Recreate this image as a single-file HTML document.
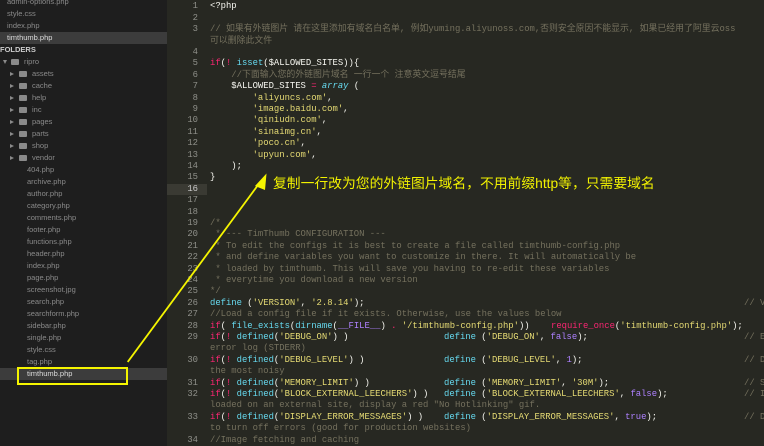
<!DOCTYPE html>
<html><head><meta charset="utf-8"><style>
*{margin:0;padding:0;box-sizing:border-box}
body{width:764px;height:446px;overflow:hidden;background:#272822;position:relative;font-family:"Liberation Sans","Noto Sans CJK SC",sans-serif}
#side{position:absolute;left:0;top:0;width:167px;height:446px;background:#1e1e1e;color:#8a8a8a;font-size:7.5px}
.r{position:absolute;height:12px;line-height:12px;white-space:nowrap;left:0;width:167px}
.sel{background:#3c3c3c;color:#ddd}
.fo{display:inline-block;width:8px;height:6px;background:#8a8a8a;vertical-align:middle;margin-right:5px;border-radius:1px}
.ar{display:inline-block;width:0;height:0;border-left:4px solid #8a8a8a;border-top:2.5px solid transparent;border-bottom:2.5px solid transparent;margin-right:5px;vertical-align:middle}
.ad{display:inline-block;width:0;height:0;border-top:4px solid #8a8a8a;border-left:2.5px solid transparent;border-right:2.5px solid transparent;margin-right:4px;vertical-align:middle}
#ed{position:absolute;left:167px;top:0;width:597px;height:446px;overflow:hidden;font-family:"Liberation Mono","Noto Sans CJK SC",monospace;font-size:8.9px;color:#f8f8f2}
.l{position:absolute;left:0;width:597px;height:11.4px;line-height:11.4px;white-space:pre}
.n{position:absolute;left:0;width:31px;text-align:right;color:#8f908a}
.c{position:absolute;left:43px}
.c2{position:absolute;left:277px}
.c3{position:absolute;left:384px}
.c4{position:absolute;left:577px}
.cur{background:#3a3a33}
.k{color:#f92672}.f{color:#66d9ef}.s{color:#e6db74}.p{color:#ae81ff}.m{color:#75715e}.i{color:#66d9ef;font-style:italic}
</style></head><body>
<div id="side">
<div class="r" style="top:-4px;padding-left:7px">admin-options.php</div>
<div class="r" style="top:8px;padding-left:7px">style.css</div>
<div class="r" style="top:20px;padding-left:7px">index.php</div>
<div class="r sel" style="top:32px;padding-left:7px">timthumb.php</div>
<div class="r" style="top:44px;padding-left:0;color:#ccc;font-weight:bold">FOLDERS</div>
<div class="r" style="top:56px;padding-left:3px"><span class="ad"></span><span class="fo"></span>ripro</div>
<div class="r" style="top:68px;padding-left:10px"><span class="ar"></span><span class="fo"></span>assets</div>
<div class="r" style="top:80px;padding-left:10px"><span class="ar"></span><span class="fo"></span>cache</div>
<div class="r" style="top:92px;padding-left:10px"><span class="ar"></span><span class="fo"></span>help</div>
<div class="r" style="top:104px;padding-left:10px"><span class="ar"></span><span class="fo"></span>inc</div>
<div class="r" style="top:116px;padding-left:10px"><span class="ar"></span><span class="fo"></span>pages</div>
<div class="r" style="top:128px;padding-left:10px"><span class="ar"></span><span class="fo"></span>parts</div>
<div class="r" style="top:140px;padding-left:10px"><span class="ar"></span><span class="fo"></span>shop</div>
<div class="r" style="top:152px;padding-left:10px"><span class="ar"></span><span class="fo"></span>vendor</div>
<div class="r" style="top:164px;padding-left:27px">404.php</div>
<div class="r" style="top:176px;padding-left:27px">archive.php</div>
<div class="r" style="top:188px;padding-left:27px">author.php</div>
<div class="r" style="top:200px;padding-left:27px">category.php</div>
<div class="r" style="top:212px;padding-left:27px">comments.php</div>
<div class="r" style="top:224px;padding-left:27px">footer.php</div>
<div class="r" style="top:236px;padding-left:27px">functions.php</div>
<div class="r" style="top:248px;padding-left:27px">header.php</div>
<div class="r" style="top:260px;padding-left:27px">index.php</div>
<div class="r" style="top:272px;padding-left:27px">page.php</div>
<div class="r" style="top:284px;padding-left:27px">screenshot.jpg</div>
<div class="r" style="top:296px;padding-left:27px">search.php</div>
<div class="r" style="top:308px;padding-left:27px">searchform.php</div>
<div class="r" style="top:320px;padding-left:27px">sidebar.php</div>
<div class="r" style="top:332px;padding-left:27px">single.php</div>
<div class="r" style="top:344px;padding-left:27px">style.css</div>
<div class="r" style="top:356px;padding-left:27px">tag.php</div>
<div class="r sel" style="top:368px;padding-left:27px">timthumb.php</div>
</div>
<div id="ed">
<div class="l" style="top:1.3px"><span class="n">1</span><span class="c">&lt;?php</span></div>
<div class="l" style="top:12.7px"><span class="n">2</span></div>
<div class="l" style="top:24.1px"><span class="n">3</span><span class="c m">// 如果有外链图片 请在这里添加有域名白名单, 例如yuming.aliyunoss.com,否则安全原因不能显示, 如果已经用了阿里云oss</span></div>
<div class="l" style="top:35.5px"><span class="c m">可以删除此文件</span></div>
<div class="l" style="top:46.9px"><span class="n">4</span></div>
<div class="l" style="top:58.3px"><span class="n">5</span><span class="c"><span class="k">if</span>(<span class="k">!</span> <span class="f">isset</span>($ALLOWED_SITES)){</span></div>
<div class="l" style="top:69.7px"><span class="n">6</span><span class="c m">    //下面输入您的外链图片域名 一行一个 注意英文逗号结尾</span></div>
<div class="l" style="top:81.1px"><span class="n">7</span><span class="c">    $ALLOWED_SITES <span class="k">=</span> <span class="i">array</span> (</span></div>
<div class="l" style="top:92.5px"><span class="n">8</span><span class="c">        <span class="s">'aliyuncs.com'</span>,</span></div>
<div class="l" style="top:103.9px"><span class="n">9</span><span class="c">        <span class="s">'image.baidu.com'</span>,</span></div>
<div class="l" style="top:115.3px"><span class="n">10</span><span class="c">        <span class="s">'qiniudn.com'</span>,</span></div>
<div class="l" style="top:126.7px"><span class="n">11</span><span class="c">        <span class="s">'sinaimg.cn'</span>,</span></div>
<div class="l" style="top:138.1px"><span class="n">12</span><span class="c">        <span class="s">'poco.cn'</span>,</span></div>
<div class="l" style="top:149.5px"><span class="n">13</span><span class="c">        <span class="s">'upyun.com'</span>,</span></div>
<div class="l" style="top:160.9px"><span class="n">14</span><span class="c">    );</span></div>
<div class="l" style="top:172.3px"><span class="n">15</span><span class="c">}</span></div>
<div class="l cur" style="top:183.7px;width:40px"><span class="n" style="color:#ccc">16</span></div>
<div class="l" style="top:195.1px"><span class="n">17</span></div>
<div class="l" style="top:206.5px"><span class="n">18</span></div>
<div class="l" style="top:217.9px"><span class="n">19</span><span class="c m">/*</span></div>
<div class="l" style="top:229.3px"><span class="n">20</span><span class="c m"> * --- TimThumb CONFIGURATION ---</span></div>
<div class="l" style="top:240.7px"><span class="n">21</span><span class="c m"> * To edit the configs it is best to create a file called timthumb-config.php</span></div>
<div class="l" style="top:252.1px"><span class="n">22</span><span class="c m"> * and define variables you want to customize in there. It will automatically be</span></div>
<div class="l" style="top:263.5px"><span class="n">23</span><span class="c m"> * loaded by timthumb. This will save you having to re-edit these variables</span></div>
<div class="l" style="top:274.9px"><span class="n">24</span><span class="c m"> * everytime you download a new version</span></div>
<div class="l" style="top:286.3px"><span class="n">25</span><span class="c m">*/</span></div>
<div class="l" style="top:297.7px"><span class="n">26</span><span class="c"><span class="f">define</span> (<span class="s">'VERSION'</span>, <span class="s">'2.8.14'</span>);</span><span class="c4 m">// V</span></div>
<div class="l" style="top:309.1px"><span class="n">27</span><span class="c m">//Load a config file if it exists. Otherwise, use the values below</span></div>
<div class="l" style="top:320.5px"><span class="n">28</span><span class="c"><span class="k">if</span>( <span class="f">file_exists</span>(<span class="f">dirname</span>(<span class="p">__FILE__</span>) <span class="k">.</span> <span class="s">'/timthumb-config.php'</span>))</span><span class="c3"><span class="k">require_once</span>(<span class="s">'timthumb-config.php'</span>);</span></div>
<div class="l" style="top:331.9px"><span class="n">29</span><span class="c"><span class="k">if</span>(<span class="k">!</span> <span class="f">defined</span>(<span class="s">'DEBUG_ON'</span>) )</span><span class="c2"><span class="f">define</span> (<span class="s">'DEBUG_ON'</span>, <span class="p">false</span>);</span><span class="c4 m">// E</span></div>
<div class="l" style="top:343.3px"><span class="c m">error log (STDERR)</span></div>
<div class="l" style="top:354.7px"><span class="n">30</span><span class="c"><span class="k">if</span>(<span class="k">!</span> <span class="f">defined</span>(<span class="s">'DEBUG_LEVEL'</span>) )</span><span class="c2"><span class="f">define</span> (<span class="s">'DEBUG_LEVEL'</span>, <span class="p">1</span>);</span><span class="c4 m">// D</span></div>
<div class="l" style="top:366.1px"><span class="c m">the most noisy</span></div>
<div class="l" style="top:377.5px"><span class="n">31</span><span class="c"><span class="k">if</span>(<span class="k">!</span> <span class="f">defined</span>(<span class="s">'MEMORY_LIMIT'</span>) )</span><span class="c2"><span class="f">define</span> (<span class="s">'MEMORY_LIMIT'</span>, <span class="s">'30M'</span>);</span><span class="c4 m">// S</span></div>
<div class="l" style="top:388.9px"><span class="n">32</span><span class="c"><span class="k">if</span>(<span class="k">!</span> <span class="f">defined</span>(<span class="s">'BLOCK_EXTERNAL_LEECHERS'</span>) )</span><span class="c2"><span class="f">define</span> (<span class="s">'BLOCK_EXTERNAL_LEECHERS'</span>, <span class="p">false</span>);</span><span class="c4 m">// I</span></div>
<div class="l" style="top:400.3px"><span class="c m">loaded on an external site, display a red "No Hotlinking" gif.</span></div>
<div class="l" style="top:411.7px"><span class="n">33</span><span class="c"><span class="k">if</span>(<span class="k">!</span> <span class="f">defined</span>(<span class="s">'DISPLAY_ERROR_MESSAGES'</span>) )</span><span class="c2"><span class="f">define</span> (<span class="s">'DISPLAY_ERROR_MESSAGES'</span>, <span class="p">true</span>);</span><span class="c4 m">// D</span></div>
<div class="l" style="top:423.1px"><span class="c m">to turn off errors (good for production websites)</span></div>
<div class="l" style="top:434.5px"><span class="n">34</span><span class="c m">//Image fetching and caching</span></div>
</div>
<div style="position:absolute;left:273px;top:174px;font-size:13.8px;line-height:20px;color:#f2f200;white-space:nowrap;font-family:'Liberation Sans','Noto Sans CJK SC',sans-serif">复制一行改为您的外链图片域名，不用前缀http等，只需要域名</div>
<svg width="764" height="446" style="position:absolute;left:0;top:0">
<line x1="127.7" y1="362" x2="261" y2="181" stroke="#f5f500" stroke-width="1.8"/>
<polygon points="266.5,173.5 255,186 265,190" fill="#f5f500"/>
<rect x="18" y="368" width="109" height="16" fill="none" stroke="#f5f500" stroke-width="2"/>
</svg>
</body></html>
